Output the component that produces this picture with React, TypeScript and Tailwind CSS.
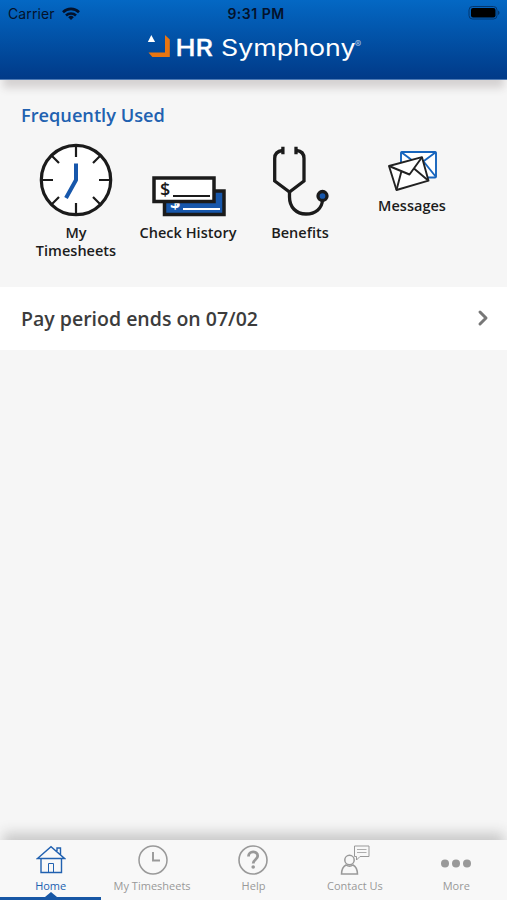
import { ReactNode } from "react";
import { ChevronRight } from "lucide-react";

const TABS = [
  { label: "Home", icon: <HomeIcon />, active: true },
  { label: "My Timesheets", icon: <ClockTabIcon /> },
  { label: "Help", icon: <HelpIcon /> },
  { label: "Contact Us", icon: <ContactIcon /> },
  { label: "More", icon: <MoreIcon /> },
];

function StatusBar() {
  return (
    <div className="flex h-7 items-center justify-between pl-2 pr-[7px] font-['Inter'] text-[#04122b]">
      <div className="flex w-20 items-center gap-[7px]">
        <span className="-mt-0.5 text-[14px] tracking-[0.1px]">Carrier</span>
        <svg className="-mt-0.5 shrink-0" width="18" height="13" viewBox="0 0 18 13" fill="none" stroke="currentColor" strokeWidth="2.6">
          <path d="M1 5.2a11.4 11.4 0 0 1 16 0" />
          <path d="M4 8.5a7.2 7.2 0 0 1 10 0" />
          <path d="M9 13 6.2 10.2a4 4 0 0 1 5.6 0z" fill="currentColor" stroke="none" />
        </svg>
      </div>
      <span className="-mt-0.5 pl-1 text-[14px] font-semibold tracking-[0.5px]">9:31 PM</span>
      <div className="flex w-20 justify-end">
        <svg className="-mt-0.5" width="32" height="14" viewBox="0 0 32 14">
          <rect x="1" y=".5" width="28" height="12.5" rx="3.5" fill="none" stroke="#03376f" />
          <rect x="3" y="2" width="24.5" height="9.5" rx="2" fill="#000" />
          <path d="M30 4.5c2 .8 2 3.7 0 4.5z" fill="#03376f" />
        </svg>
      </div>
    </div>
  );
}

function Logo() {
  return (
    <svg className="mx-auto block" width="216" height="38" viewBox="145.5 28 216 38" fontFamily="Inter, sans-serif" fill="#fff">
      <path d="M150.8 35l3.8 7h-7.3z" />
      <path d="M164.5 35l4.8 4.5V57h-17.5l-3.8-4.5h16.5z" fill="#e87511" />
      <text x="175" y="56" fontSize="22.5" fontWeight="500" stroke="#fff" strokeWidth=".3" textLength="37.5" lengthAdjust="spacingAndGlyphs">HR</text>
      <text x="220.5" y="56" fontSize="22.5" textLength="134.5" lengthAdjust="spacingAndGlyphs">Symphony</text>
      <text x="354.3" y="47.5" fontSize="10" fontWeight="700" fill="#9ebbe0" textLength="6.5" lengthAdjust="spacingAndGlyphs">®</text>
    </svg>
  );
}

function ClockIcon() {
  return (
    <svg width="74" height="74" viewBox="0 0 74 74" fill="none" stroke="#1b1b1b">
      <circle cx="37" cy="37" r="34.7" strokeWidth="3.2" fill="#fff" />
      <path strokeWidth="2.2" d="M37 3v11M37 60v11M3 37h11M60 37h11M13 13l7 7M54 54l7 7M61 13l-7 7M20 54l-7 7" />
      <path stroke="#1757ab" strokeWidth="4" strokeLinejoin="round" d="M37 20.5V37l-10 18" />
    </svg>
  );
}

function ChecksIcon() {
  return (
    <svg className="translate-x-px" width="74" height="42" viewBox="0 0 74 42">
      <rect x="12.5" y="16" width="59.5" height="23.5" fill="#1757ab" stroke="#1b1b1b" strokeWidth="3.5" />
      <text x="18" y="34" fontFamily="Open Sans" fontSize="18" fontWeight="700" fill="#fff">$</text>
      <path d="M31 34h37" stroke="#fff" strokeWidth="1.8" />
      <rect x="2" y="3" width="60" height="23.5" fill="#fff" stroke="#1b1b1b" strokeWidth="3.5" />
      <text x="8" y="21" fontFamily="Open Sans" fontSize="18" fontWeight="600" fill="#1b1b1b">$</text>
      <path d="M21 21h37" stroke="#1b1b1b" strokeWidth="1.8" />
    </svg>
  );
}

function StethoscopeIcon() {
  return (
    <svg width="60" height="74" viewBox="0 0 60 74" fill="none" stroke="#1b1b1b" strokeWidth="3.3">
      <path d="M12.5 7.5C7.5 8 4.7 11 4.7 15.5V38l14.8 11L34 38V15.500c0-4.5-2.5-7.5-7.500-8" />
      <path d="M12.9 3.8v7.4M26 3.8v7.4" />
      <path d="M19.5 48v6c0 10 6.5 17 16.5 17 9.5 0 16-5.5 16.5-14" />
      <circle cx="52.5" cy="53" r="4.5" fill="#1757ab" />
    </svg>
  );
}

function MessagesIcon() {
  return (
    <svg className="translate-x-px translate-y-0.5" width="52" height="42" viewBox="0 0 52 42" fill="none" strokeLinejoin="round">
      <g stroke="#1765bd" strokeWidth="1.9">
        <rect x="14" y="2" width="35" height="25.5" rx="1" fill="#fff" />
        <path d="M14 2l17.5 13L49 2M37 12l12 15" />
      </g>
      <g stroke="#222" strokeWidth="1.9">
        <path d="M2 16 35 7.2l6.5 23.500L9.500 40z" fill="#fff" />
        <path d="M2 16l20.5 8.500L35 7.200M9.500 40l5-19M41.500 30.700 27 18.500" />
      </g>
    </svg>
  );
}

function HomeIcon() {
  return (
    <svg width="30" height="30" viewBox="0 0 30 30" fill="none" stroke="currentColor" strokeWidth="1.4">
      <path d="M1.5 13.5 15 1.8 28.5 13.5zM5 13.5v14h20.500v-14M21 6V3h3.500v6.500" />
      <path d="M12.5 27.5v-9h5v9" strokeWidth="1" />
    </svg>
  );
}

function ClockTabIcon() {
  return (
    <svg className="translate-x-px" width="30" height="30" viewBox="0 0 30 30" fill="none" stroke="currentColor">
      <circle cx="15" cy="15" r="14" strokeWidth="1.5" />
      <path d="M15 7v8.500h7" strokeWidth="1.9" />
    </svg>
  );
}

function HelpIcon() {
  return (
    <svg width="30" height="30" viewBox="0 0 30 30" fill="none" stroke="currentColor">
      <circle cx="15" cy="15" r="14" strokeWidth="1.6" />
      <path d="M10.500 11.500c0-6 9.200-6 9.200-.5 0 3.500-4.500 3.500-4.500 7.500" strokeWidth="2.8" />
      <circle cx="15.2" cy="22" r="1.8" fill="currentColor" stroke="none" />
    </svg>
  );
}

function ContactIcon() {
  return (
    <svg width="30" height="30" viewBox="0 0 30 30" fill="none" stroke="currentColor" strokeWidth="1.5">
      <circle cx="9.5" cy="15" r="4.7" />
      <path d="M1.5 29c.2-5 1.5-7.5 4.5-9 2 1.5 5 1.5 7 0 3 1.5 4.300 4 4.500 9z" />
      <path d="M15 1h14v10.500H20L16.500 15v-3.500H14.500V1z" strokeWidth="1" />
      <path d="M17 4.500h9.500M17 7.500h9.500" strokeWidth=".8" />
    </svg>
  );
}

function MoreIcon() {
  return (
    <svg width="30" height="30" viewBox="0 0 30 30" fill="currentColor">
      <circle cx="4" cy="18.5" r="4" />
      <circle cx="15" cy="18.5" r="4" />
      <circle cx="26" cy="18.5" r="4" />
    </svg>
  );
}

function Shortcut({ icon, label }: { icon: ReactNode; label: string }) {
  return (
    <button className="flex w-28 flex-col items-center">
      {icon}
      <span className="mt-[7px] px-1 text-center text-[14.5px] font-semibold leading-[18px] tracking-[0.02px] text-[#1c1c1c]">
        {label}
      </span>
    </button>
  );
}

export default function App() {
  return (
    <div className="flex h-[900px] w-[507px] flex-col overflow-hidden bg-[#f6f6f6] font-['Open_Sans',sans-serif]">
      <header className="h-[80px] shrink-0 border-b border-[#4d7ab5] bg-linear-to-b from-[#0468c4] to-[#013a88] shadow-[0_11px_8px_-3px_#d5d2d2]">
        <StatusBar />
        <Logo />
      </header>

      <main className="flex-1 pt-[14px]">
        <section className="h-[193px]">
          <h2 className="pl-[21px] pt-[8px] text-[18.2px] font-semibold leading-[26px] text-[#2161b0]">Frequently Used</h2>
          <div className="flex items-start pl-5 pt-[15px]">
            <Shortcut icon={<ClockIcon />} label="My Timesheets" />
            <div className="whitespace-nowrap pt-[32px]">
              <Shortcut icon={<ChecksIcon />} label="Check History" />
            </div>
            <Shortcut icon={<StethoscopeIcon />} label="Benefits" />
            <div className="pt-[5px]">
              <Shortcut icon={<MessagesIcon />} label="Messages" />
            </div>
          </div>
        </section>
        <button className="flex h-[63px] w-full items-center justify-between bg-white pl-[21px] pr-3 text-[#3c3c3c]">
          <span className="pt-px text-[19.5px] font-semibold">Pay period ends on 07/02</span>
          <ChevronRight className="-mt-px size-6 text-[#777]" strokeWidth={3} />
        </button>
      </main>

      <nav className="grid h-[60px] shrink-0 grid-cols-5 bg-[#f8f8f8] shadow-[0_-10px_12px_-3px_#c9c9c9]">
        {TABS.map((tab) => (
          <button
            key={tab.label}
            className={`relative flex flex-col items-center pt-[5px] ${
              tab.active ? "border-b-[3px] border-[#1757a5] text-[#2161b0]" : "text-[#999]"
            }`}
          >
            {tab.icon}
            <span className={`mt-[3px] text-[11px] leading-[15px] ${tab.active ? "font-medium" : ""}`}>{tab.label}</span>
            {tab.active && (
              <svg className="absolute bottom-0 left-1/2 -translate-x-1/2" width="12" height="5" viewBox="0 0 12 5" fill="#1757a5">
                <path d="M0 5l6-5 6 5z" />
              </svg>
            )}
          </button>
        ))}
      </nav>
    </div>
  );
}
